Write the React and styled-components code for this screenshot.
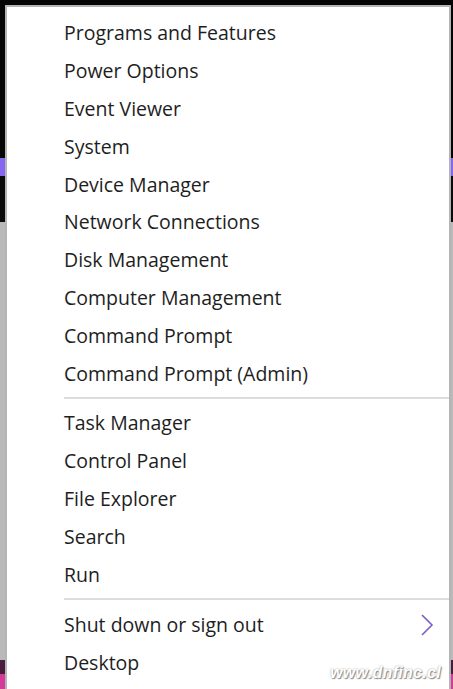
import React from "react";
import styled, { createGlobalStyle } from "styled-components";

const Global = createGlobalStyle`
  html, body { margin: 0; padding: 0; }
  body {
    height: 689px;
    overflow: hidden;
    background: linear-gradient(
      to bottom,
      #050505 0px, #050505 158px,
      #8466f2 158px, #8466f2 176px,
      #0a0a0a 176px, #0a0a0a 222px,
      #b9b9b9 222px, #b9b9b9 660px,
      #4a1c3c 660px, #4a1c3c 674px,
      #d23c98 674px, #d23c98 689px
    );
  }
`;

const Desktop = styled.div`
  padding: 5px 3px 0 5px;
  height: 689px;
  box-sizing: border-box;
`;

const Menu = styled.div`
  position: relative;
  box-sizing: border-box;
  width: 446px;
  height: 684px;
  background: #ffffff;
  border: 2px solid #b4b4b4;
  border-bottom: none;
  padding-top: 7px;
  font-family: "Open Sans", "Noto Sans", sans-serif;
`;

const Item = styled.div`
  display: flex;
  align-items: center;
  justify-content: space-between;
  height: 37.8px;
  padding-left: 57px;
  padding-right: 15px;
  font-size: 19.5px;
  color: #1e1e1e;
  white-space: nowrap;
`;

const Separator = styled.div`
  height: 2px;
  margin: 5px 0 ${(p) => p.$after}px 57px;
  background: #dcdcdc;
`;

const Watermark = styled.div`
  position: absolute;
  right: 8px;
  bottom: 7px;
  font-family: "Liberation Sans", Arial, sans-serif;
  font-style: italic;
  font-weight: bold;
  font-size: 16px;
  letter-spacing: 0.3px;
  color: #ffffff;
  text-shadow: 1px 1px 1px #8a8a8a, 0 0 2px #9a9a9a;
`;

const Chevron = () => (
  <svg width="14" height="22" viewBox="0 0 14 22" fill="none">
    <path d="M2 1 L12 11 L2 21" stroke="#7a5ec4" strokeWidth="1.6" />
  </svg>
);

const group1 = [
  "Programs and Features",
  "Power Options",
  "Event Viewer",
  "System",
  "Device Manager",
  "Network Connections",
  "Disk Management",
  "Computer Management",
  "Command Prompt",
  "Command Prompt (Admin)",
];

const group2 = ["Task Manager", "Control Panel", "File Explorer", "Search", "Run"];

export default function App() {
  return (
    <>
      <Global />
      <Desktop>
        <Menu>
          {group1.map((t) => (
            <Item key={t}>{t}</Item>
          ))}
          <Separator $after={5} />
          {group2.map((t) => (
            <Item key={t}>{t}</Item>
          ))}
          <Separator $after={6} />
          <Item>
            <span>Shut down or sign out</span>
            <Chevron />
          </Item>
          <Item>Desktop</Item>
          <Watermark>www.dnfinc.cl</Watermark>
        </Menu>
      </Desktop>
    </>
  );
}
